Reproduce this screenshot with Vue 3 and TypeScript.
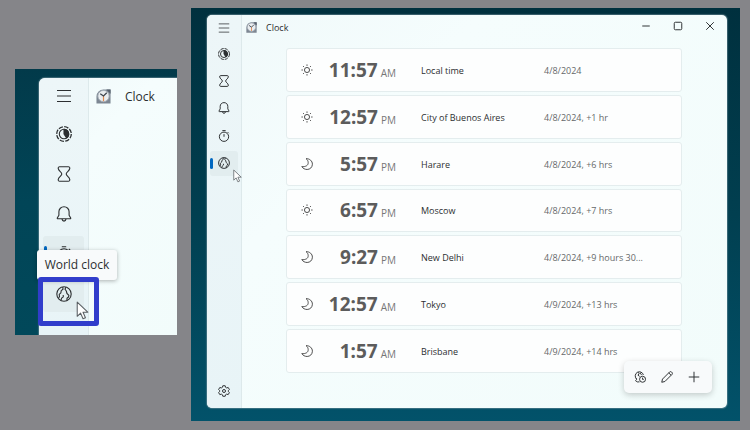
<script setup lang="ts">
interface Place {
  sky: 'sun' | 'moon'
  time: string
  half: 'AM' | 'PM'
  name: string
  date: string
}

interface NavItem {
  icon: string
  label: string
}

const nav: NavItem[] = [
  { icon: 'focus', label: 'Focus sessions' },
  { icon: 'hourglass', label: 'Timer' },
  { icon: 'bell', label: 'Alarm' },
  { icon: 'stopwatch', label: 'Stopwatch' },
  { icon: 'globe', label: 'World clock' },
]

const places: Place[] = [
  { sky: 'sun', time: '11:57', half: 'AM', name: 'Local time', date: '4/8/2024' },
  { sky: 'sun', time: '12:57', half: 'PM', name: 'City of Buenos Aires', date: '4/8/2024, +1 hr' },
  { sky: 'moon', time: '5:57', half: 'PM', name: 'Harare', date: '4/8/2024, +6 hrs' },
  { sky: 'sun', time: '6:57', half: 'PM', name: 'Moscow', date: '4/8/2024, +7 hrs' },
  { sky: 'moon', time: '9:27', half: 'PM', name: 'New Delhi', date: '4/8/2024, +9 hours 30...' },
  { sky: 'moon', time: '12:57', half: 'AM', name: 'Tokyo', date: '4/9/2024, +13 hrs' },
  { sky: 'moon', time: '1:57', half: 'AM', name: 'Brisbane', date: '4/9/2024, +14 hrs' },
]
</script>

<template>
  <div class="stage">
    <svg class="sprite" aria-hidden="true">
      <symbol id="menu" viewBox="0 0 16 16"><path d="M1 2.5h14M1 8h14M1 13.5h14" stroke-width="1" /></symbol>
      <symbol id="focus" viewBox="0 0 16 16">
        <circle cx="8" cy="8" r="7.3" stroke-width="1.3" stroke-dasharray="4.4 1.33" />
        <circle cx="8" cy="8" r="4.7" />
        <path d="M8 3.3a4.7 4.7 0 0 1 2.6 8.6L8 8z" fill="currentColor" />
      </symbol>
      <symbol id="hourglass" viewBox="0 0 16 16">
        <path d="M3.6.8h8.8c1 0 1.5.7 1.4 1.6-.3 2.8-3.6 3.6-3.6 5.6s3.3 2.8 3.6 5.6c.1.9-.4 1.6-1.4 1.6H3.6c-1 0-1.5-.7-1.4-1.6C2.5 10.8 5.8 10 5.8 8S2.5 5.2 2.2 2.4C2.1 1.5 2.6.8 3.6.8z" />
      </symbol>
      <symbol id="bell" viewBox="0 0 16 16">
        <path d="M8 .8C5 .8 2.9 3 2.9 5.8v3.4L1.3 12c-.2.4 0 .8.5.8h12.4c.5 0 .7-.4.5-.8l-1.6-2.8V5.8C13.1 3 11 .8 8 .8zM6 13.2c.2 1.2 1 1.9 2 1.9s1.8-.7 2-1.9" />
      </symbol>
      <symbol id="stopwatch" viewBox="0 0 16 16">
        <circle cx="8" cy="9" r="6.2" /><path d="M8 5.5V9M5.8.8h4.4M12.8 2.8l1.5 1.5" />
      </symbol>
      <symbol id="globe" viewBox="0 0 16 16">
        <circle cx="8" cy="8" r="7.2" />
        <path d="M6.800 1 7 3.200 5.200 4.600 4.900 6.800 3.200 8.300 3.500 10.500 2.500 12.200M9.800 1.200 9 3.200 10.300 5 11 7.500 12.900 9.300 12.500 11 11 12.200 10.900 14.500M5 14.300 5.600 12.200 7.300 10.800 7.200 9" />
      </symbol>
      <symbol id="gear" viewBox="0 0 16 16">
        <path d="M6.4 1h3.2l.5 2.1 1.4.8 2.1-.6 1.6 2.8L13.7 7.6v1l1.5 1.4-1.6 2.8-2.1-.6-1.4.8-.5 2H6.4l-.5-2-1.4-.8-2.1.6L.8 10l1.5-1.4v-1L.8 6.1l1.6-2.8 2.1.6 1.4-.8z" /><circle cx="8" cy="8" r="2" />
      </symbol>
      <symbol id="sun" viewBox="0 0 16 16">
        <circle cx="8" cy="8" r="3.4" />
        <path d="M8 .6v1.9M8 13.5v1.9M.6 8h1.9M13.5 8h1.9M2.8 2.8l1.3 1.3M11.9 11.9l1.3 1.3M13.2 2.8l-1.3 1.3M4.1 11.9l-1.3 1.3" />
      </symbol>
      <symbol id="moon" viewBox="0 0 16 16">
        <path d="M6.800.8C11.600.8 15.200 4 15.200 8.300c0 4-3.200 7-7 7-3 0-5.600-1.400-7.200-3.800C6 12 9.800 10 9.600 6 9.500 3.800 8.400 2.200 6.800.8z" />
      </symbol>
      <symbol id="compare" viewBox="0 0 16 16">
        <path d="M12.5 5.3A5.5 5.5 0 1 0 3.2 10.4M5.3 1.5l1.7 2.3-1.8 1.7 2.3 1.7M9.5 2 8.5 3.8l1.8 1.2M2.2 9.6c2.3.6 1.4 2-.2 3.2l2.3 1.7h3" /><circle cx="11.4" cy="11" r="4" /><path d="M11.4 8.8v2.4H13" />
      </symbol>
      <symbol id="pencil" viewBox="0 0 16 16">
        <path d="M1 15l1-4.2L11.6 1.2c.7-.6 1.7-.5 2.4.1l.7.7c.6.7.7 1.7.1 2.4L5.2 14zM10.3 2.5l3.2 3.2" />
      </symbol>
      <symbol id="plus" viewBox="0 0 16 16"><path d="M8 1v14M1 8h14" /></symbol>
      <symbol id="minimize" viewBox="0 0 16 16"><path d="M3 8h10" /></symbol>
      <symbol id="maximize" viewBox="0 0 16 16"><rect x="3" y="3" width="10" height="10" rx="1.5" /></symbol>
      <symbol id="close" viewBox="0 0 16 16"><path d="M3 3l10 10M13 3L3 13" /></symbol>
      <symbol id="clock-logo" viewBox="0 0 16 16">
        <path d="M.5 15.5V8A7.5 7.5 0 0 1 8 .5h7.5v15z" fill="#7d8793" />
        <path d="M11 .5h4.5V5z" fill="#56606d" />
        <circle cx="8" cy="7.5" r="6" fill="#e9edf0" stroke="#a6afb8" stroke-width="1" />
        <path d="M8 7.5V13" stroke="#e08a52" stroke-width="1.3" />
        <path d="M4.5 5 8 7.5 11.5 4" stroke="#3c434b" stroke-width="1.3" />
      </symbol>
      <symbol id="arrow" viewBox="0 0 12 18">
        <path d="M1 1v13.5l3.2-3 2.3 5.3 2.3-1-2.3-5.2H11z" fill="#fff" stroke="#5a5f63" stroke-width="1" stroke-linejoin="round" />
      </symbol>
    </svg>

    <section class="shot detail">
      <div class="window">
        <nav class="rail">
          <button class="rail-button head" aria-label="Menu"><svg class="icon"><use href="#menu" /></svg></button>
          <div class="rail-items">
            <button
              v-for="(item, i) in nav"
              :key="item.icon"
              class="rail-button"
              :class="{ lit: i > 2, current: i === 3 }"
              :aria-label="item.label"
            >
              <svg class="icon"><use :href="'#' + item.icon" /></svg>
            </button>
          </div>
        </nav>
        <div class="content">
          <header class="title-bar">
            <svg class="app-icon"><use href="#clock-logo" /></svg>
            <span class="title">Clock</span>
          </header>
        </div>
      </div>
      <div class="tooltip" role="tooltip">World clock</div>
      <div class="marker"></div>
      <svg class="pointer"><use href="#arrow" /></svg>
    </section>

    <section class="shot full">
      <div class="window">
        <nav class="rail">
          <button class="rail-button head" aria-label="Menu"><svg class="icon"><use href="#menu" /></svg></button>
          <div class="rail-items">
            <button
              v-for="(item, i) in nav"
              :key="item.icon"
              class="rail-button"
              :class="{ lit: i === 4, current: i === 4 }"
              :aria-label="item.label"
            >
              <svg class="icon"><use :href="'#' + item.icon" /></svg>
            </button>
          </div>
          <button class="rail-button settings" aria-label="Settings"><svg class="icon"><use href="#gear" /></svg></button>
        </nav>
        <div class="content">
          <header class="title-bar">
            <svg class="app-icon"><use href="#clock-logo" /></svg>
            <span class="title">Clock</span>
            <div class="controls">
              <button aria-label="Minimize"><svg class="icon"><use href="#minimize" /></svg></button>
              <button aria-label="Maximize"><svg class="icon"><use href="#maximize" /></svg></button>
              <button aria-label="Close"><svg class="icon"><use href="#close" /></svg></button>
            </div>
          </header>
          <ul class="places">
            <li v-for="place in places" :key="place.name" class="card">
              <svg class="icon sky"><use :href="'#' + place.sky" /></svg>
              <div class="time"><strong>{{ place.time }}</strong><span>{{ place.half }}</span></div>
              <div class="name">{{ place.name }}</div>
              <div class="date">{{ place.date }}</div>
            </li>
          </ul>
        </div>
        <div class="toolbar">
          <button aria-label="Compare"><svg class="icon"><use href="#compare" /></svg></button>
          <button aria-label="Edit"><svg class="icon"><use href="#pencil" /></svg></button>
          <button aria-label="Add"><svg class="icon"><use href="#plus" /></svg></button>
        </div>
      </div>
      <svg class="pointer"><use href="#arrow" /></svg>
    </section>
  </div>
</template>

<style>
body {
  background: #858589;
}
</style>

<style scoped>
.stage {
  box-sizing: border-box;
  min-height: 100vh;
  display: flex;
  gap: 14px;
  padding: 8px 10px 9px 15px;
  background: #858589;
  font-family: "Open Sans", "Noto Sans", sans-serif;
  color: #2c2f31;
}

.sprite {
  position: absolute;
  width: 0;
  height: 0;
}

button {
  display: flex;
  align-items: center;
  justify-content: center;
  padding: 0;
  border: 0;
  background: none;
  color: inherit;
}

.icon {
  width: 12px;
  height: 12px;
  fill: none;
  stroke: currentColor;
  stroke-width: 1.3;
  stroke-linejoin: round;
  overflow: visible;
}

.shot {
  position: relative;
  box-sizing: border-box;
  display: flex;
}

.window {
  position: relative;
  flex: 1;
  display: flex;
  background: linear-gradient(135deg, #f0f9fa, #f5fdfd 30%, #f2fcfb);
  box-shadow: 0 0 1px 1px rgb(120 150 160 / 50%);
}

.rail {
  display: flex;
  flex-direction: column;
  box-sizing: border-box;
  border-right: 1px solid #dde9eb;
  background: linear-gradient(#edf6f8, #e8f4f7);
}

.rail-items {
  display: grid;
  grid-auto-rows: 1fr;
}

.rail-button {
  position: relative;
}

.lit::before {
  content: "";
  position: absolute;
  inset: 1px 3px;
  border-radius: 3px;
  background: #e2edef;
}

.lit .icon {
  position: relative;
}

.current::after {
  content: "";
  position: absolute;
  left: 3px;
  width: 3px;
  height: 11px;
  border-radius: 2px;
  background: #0067c0;
}

.content {
  flex: 1;
  min-width: 0;
  display: flex;
  flex-direction: column;
}

.title-bar {
  display: flex;
  align-items: center;
}

.app-icon {
  width: 11px;
  height: 11px;
  fill: none;
}

/* Enlarged part of the window */
.detail {
  flex: 0 0 162px;
  height: 266px;
  margin-top: 61px;
  padding: 9px 0 0 24px;
  overflow: hidden;
  background: linear-gradient(#023a4a, #014557 50%, #01485a);
}

.detail .window {
  border-radius: 6px 0 0;
}

.detail .rail {
  width: 50px;
  border-radius: 6px 0 0;
}

.detail .head {
  height: 36px;
}

.detail .rail-items {
  height: 200px;
}

.detail .icon {
  width: 16px;
  height: 16px;
  stroke-width: 1.1;
}

.detail .lit::before {
  inset: 2px 4px;
}

.detail .current::after {
  left: 5px;
  height: 16px;
}

.detail .title-bar {
  gap: 14px;
  height: 36px;
  padding-left: 7px;
  font-size: 12px;
}

.detail .app-icon {
  width: 15px;
  height: 15px;
}

.tooltip {
  position: absolute;
  left: 22px;
  top: 181px;
  box-sizing: border-box;
  width: 80px;
  height: 30px;
  border-radius: 3px;
  background: #f8fafb;
  box-shadow: 0 1px 4px rgb(0 0 0 / 30%);
  font-size: 12px;
  line-height: 30px;
  text-align: center;
  white-space: nowrap;
}

.marker {
  position: absolute;
  left: 23px;
  top: 208px;
  box-sizing: border-box;
  width: 61px;
  height: 49px;
  border: 5px solid #313dcb;
  border-radius: 3px;
}

.pointer {
  position: absolute;
  fill: none;
}

.detail .pointer {
  left: 61px;
  top: 232px;
  width: 13px;
  height: 19px;
}

/* Whole window */
.full {
  flex: 1;
  padding: 7px 13px 13px 16px;
  background: linear-gradient(#00303e, #013f50 50%, #02526a);
}

.full .window {
  border-radius: 5px;
}

.full .rail {
  width: 35px;
  border-radius: 5px 0 0 5px;
}

.full .head {
  height: 25px;
}

.full .rail-items {
  height: 137px;
}

.full .settings {
  height: 34px;
  margin-top: auto;
}

.full .title-bar {
  gap: 9px;
  height: 25px;
  padding-left: 4px;
  font-size: 9px;
}

.controls {
  display: flex;
  gap: 20px;
  margin-left: auto;
  padding: 0 11px 4px 0;
}

.places {
  flex: 1;
  display: grid;
  grid-auto-rows: 1fr;
  gap: 3px;
  margin: 0;
  padding: 8px 45px 35px 44px;
  list-style: none;
}

.card {
  display: grid;
  grid-template-columns: 12px 58px 98px 1fr;
  align-items: center;
  column-gap: 25px;
  padding: 0 14px;
  border: 1px solid #e4edee;
  border-radius: 3px;
  background: #fdfefe;
  font-size: 9px;
  line-height: 14px;
  white-space: nowrap;
}

.sky {
  color: #4a4a4a;
}

.time {
  display: flex;
  align-items: baseline;
  justify-content: flex-end;
  gap: 3px;
  padding-top: 3px;
  color: #5c5c5c;
  line-height: 24px;
}

.time strong {
  font-family: "Noto Sans", sans-serif;
  font-size: 19px;
  font-weight: 700;
}

.time span {
  font-size: 10px;
  color: #777;
}

.name,
.date {
  padding-top: 2px;
}

.date {
  color: #66696a;
}

.toolbar {
  position: absolute;
  right: 15px;
  bottom: 15px;
  display: flex;
  gap: 15px;
  padding: 10px 12px 10px 10px;
  border-radius: 5px;
  background: #f8fafb;
  box-shadow: 0 2px 6px rgb(0 0 0 / 20%);
}

.full .pointer {
  left: 42px;
  top: 161px;
  width: 9px;
  height: 14px;
}
</style>
